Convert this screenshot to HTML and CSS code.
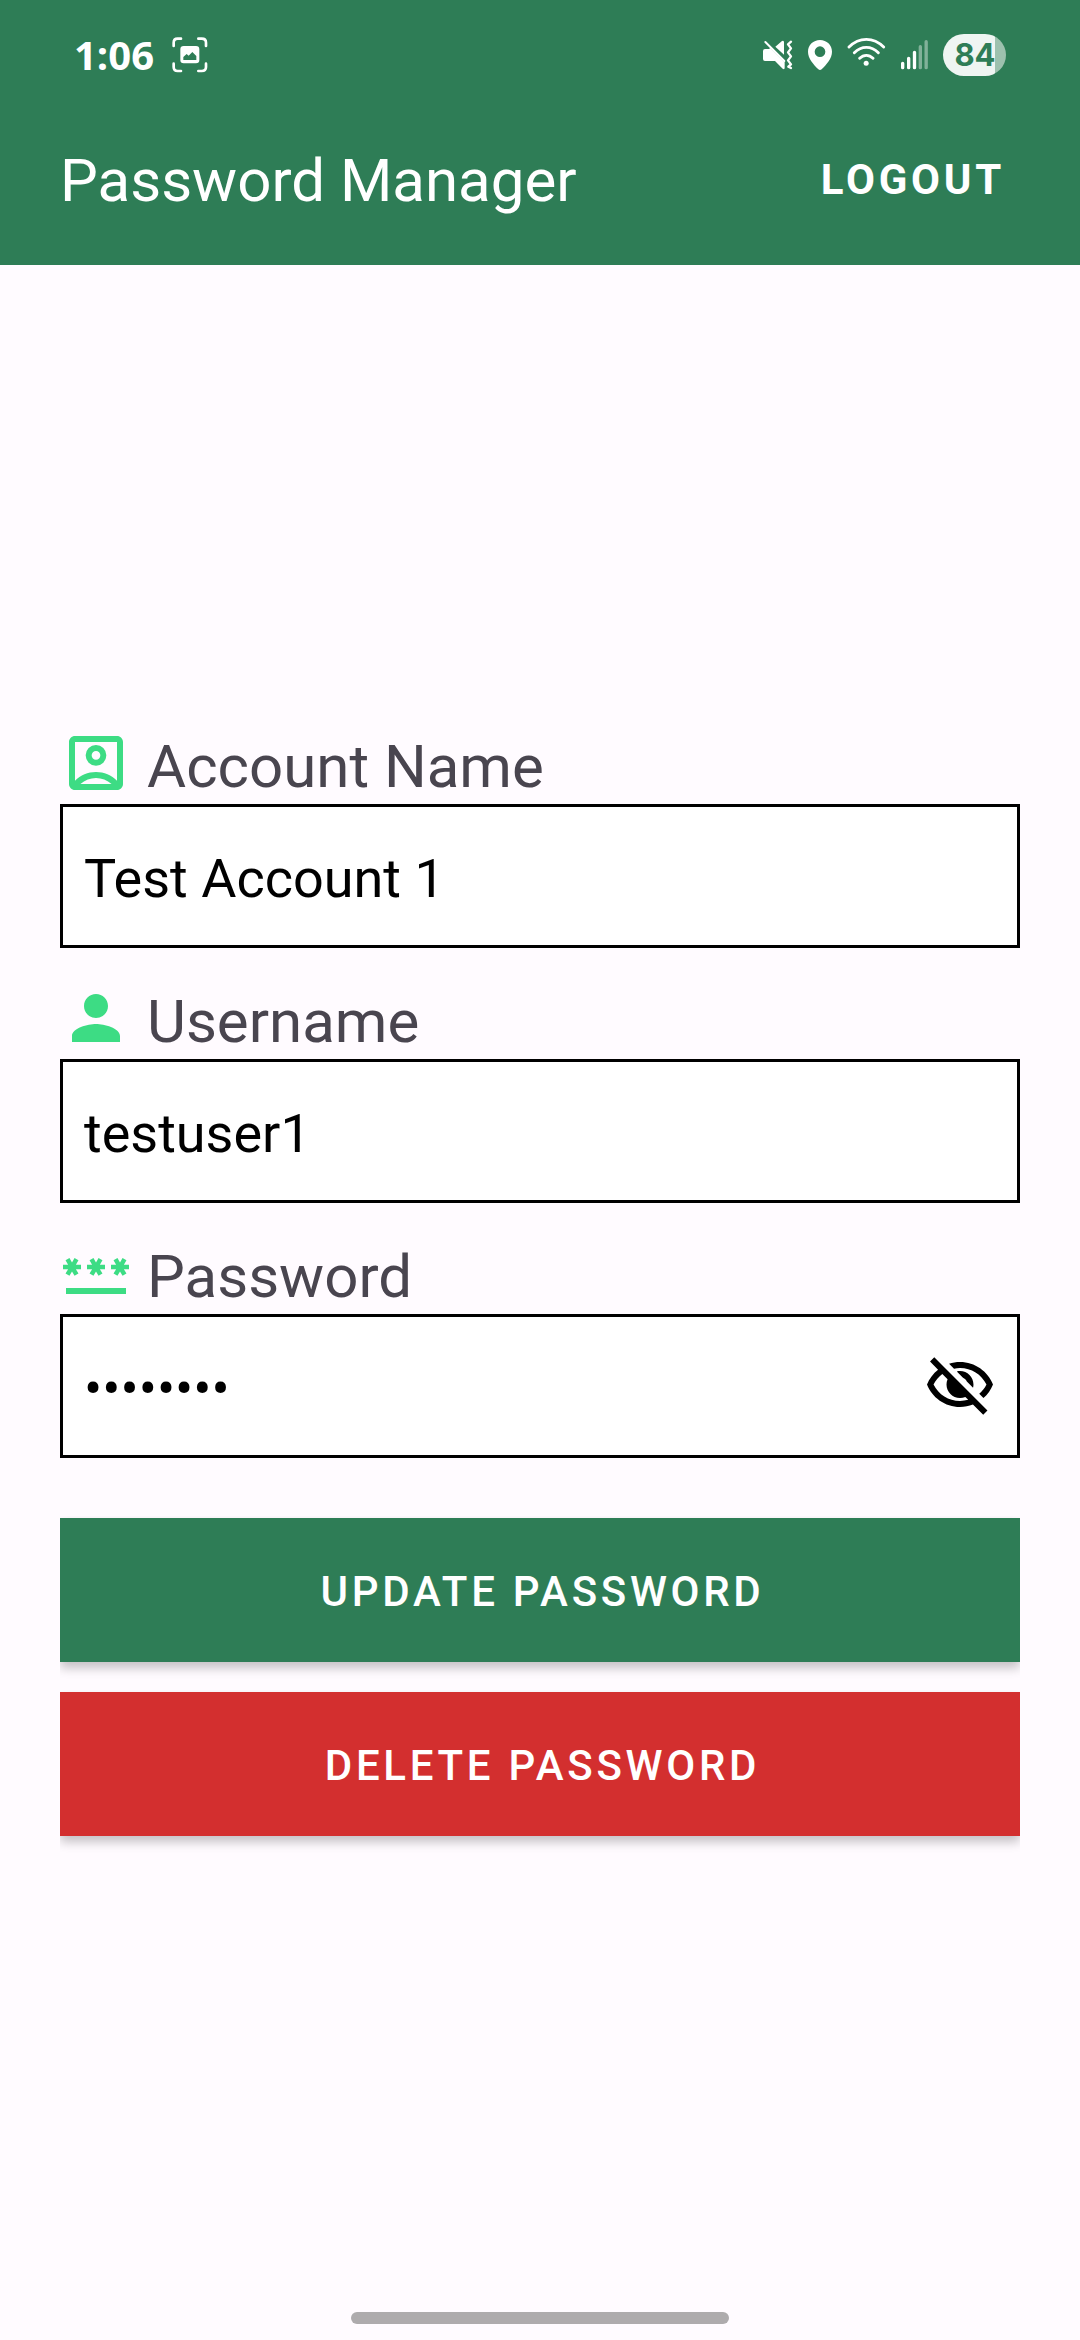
FILE: index.html
```html
<!DOCTYPE html>
<html lang="en">
<head>
<meta charset="utf-8">
<title>Password Manager</title>
<link rel="stylesheet" href="styles.css">
</head>
<body>
<header class="header">
  <div class="status">
    <span class="clock">1:06</span>
    <svg class="capture" width="36" height="36" viewBox="395 83 108 108" fill="none" stroke="#fff" stroke-width="8" stroke-linecap="round">
      <path d="M400 110V100Q400 88 412 88H422M474 88H484Q497 88 497 100V110M497 163V173Q497 185 484 185H474M422 185H412Q400 185 400 173V163"/>
      <path fill="#fff" stroke="none" fill-rule="evenodd" d="M430 110H467Q477 110 477 120V152Q477 162 467 162H430Q420 162 420 152V120Q420 110 430 110ZM429 143L439 134L445 139L456 128L468 140V152H429Z"/>
    </svg>
    <div class="indicators">
      <svg width="30" height="30" viewBox="66 90 90 90" fill="#fff">
        <path d="M72 117H84L88 114L131 157V173Q131 180 125 176L102 153H72Q66 153 66 147V123Q66 117 72 117ZM103 110L123 93Q129 90 129 97V134Z"/>
        <path d="M73 96L130 153" stroke="#fff" stroke-width="6" stroke-linecap="round"/>
        <path d="M150 95L141 103L150 115L141 127L150 139L141 151L150 163L142 170L150 174" fill="none" stroke="#fff" stroke-width="7" stroke-linecap="round" stroke-linejoin="round"/>
      </svg>
      <svg width="24" height="30" viewBox="204 90 72 90">
        <path fill="#fff" fill-rule="evenodd" d="M240 90C220 90 204 105 204 125C204 146 220 162 235 178Q240 182 245 178C260 162 276 146 276 125C276 105 260 90 240 90ZM240 109A16 16 0 1 1 240 141A16 16 0 1 1 240 109Z"/>
      </svg>
      <svg width="39" height="36" viewBox="321 81 117 108" fill="none" stroke="#fff" stroke-width="8.500" stroke-linecap="round">
        <path d="M327 111Q350 88 379 88Q408 88 431 111M343 128Q359 112 379 112Q399 112 415 128M359 145Q368 136 379 136Q390 136 399 145"/>
        <circle cx="378.500" cy="160" r="7.500" fill="#fff" stroke="none"/>
      </svg>
      <svg width="27" height="30" viewBox="483 90 81 90" fill="none" stroke="#fff" stroke-width="10" stroke-linecap="round">
        <path d="M488 160V173M506 145V173M523.500 127V173"/>
        <path d="M541 110V173M558.500 95V173" opacity=".4"/>
      </svg>
      <span class="battery">84</span>
    </div>
  </div>
  <div class="toolbar">
    <h1 class="title">Password Manager</h1>
    <button class="logout">LOGOUT</button>
  </div>
</header>
<main class="form">
  <section class="field">
    <div class="label">
      <svg class="icon" viewBox="0 0 24 24"><path fill-rule="evenodd" d="M19 3H5c-1.110 0-2 .9-2 2v14c0 1.100.89 2 2 2h14c1.100 0 2-.9 2-2V5c0-1.100-.9-2-2-2zM6.800 19c1.500-1.250 3.300-2 5.200-2s3.700.75 5.200 2zM19 17.900C17.200 16.100 14.700 15 12 15s-5.200 1.100-7 2.900V5h14zM12 6a3.450 3.450 0 1 0 0 6.900A3.450 3.450 0 0 0 12 6zm0 4.900a1.450 1.450 0 1 1 0-2.900a1.450 1.450 0 0 1 0 2.900z"/></svg>
      <span>Account Name</span>
    </div>
    <div class="box">Test Account 1</div>
  </section>
  <section class="field">
    <div class="label">
      <svg class="icon" viewBox="0 0 24 24"><path d="M12 12c2.210 0 4-1.790 4-4s-1.790-4-4-4-4 1.790-4 4 1.790 4 4 4zm0 2c-2.670 0-8 1.340-8 4v2h16v-2c0-2.660-5.330-4-8-4z"/></svg>
      <span>Username</span>
    </div>
    <div class="box">testuser1</div>
  </section>
  <section class="field">
    <div class="label">
      <svg class="icon" viewBox="0 0 24 24"><path d="M2 17h20v2H2zM3.150 12.950L4 11.470l.85 1.480 1.300-.75-.85-1.480H7v-1.500H5.300l.85-1.470L4.850 7 4 8.470 3.150 7l-1.300.75.85 1.470H1v1.500h1.700l-.85 1.480zM9.850 12.200l1.300.75.85-1.480.85 1.480 1.300-.75-.85-1.480H15v-1.500h-1.700l.85-1.470-1.300-.75L12 8.470 11.150 7l-1.300.75.85 1.470H9v1.500h1.700zM23 9.220h-1.700l.85-1.470-1.300-.75L20 8.470 19.150 7l-1.300.75.85 1.470H17v1.500h1.700l-.85 1.480 1.300.75.85-1.480.85 1.480 1.300-.75-.85-1.480H23z"/></svg>
      <span>Password</span>
    </div>
    <div class="box">
      <span class="dots">••••••••</span>
      <svg class="eye" viewBox="0 0 24 24"><path d="M12 6c3.790 0 7.170 2.130 8.820 5.500-.59 1.220-1.420 2.270-2.410 3.120l1.410 1.410c1.390-1.230 2.490-2.770 3.180-4.530C21.270 7.110 17 4 12 4c-1.270 0-2.490.2-3.640.57l1.650 1.650C10.660 6.090 11.320 6 12 6zm-1.070 1.140L13 9.210c.57.25 1.030.71 1.280 1.280l2.070 2.070c.08-.34.14-.7.14-1.070C16.500 9.010 14.480 7 12 7c-.37 0-.72.05-1.070.14zM2.010 3.870l2.680 2.680C3.060 7.830 1.770 9.530 1 11.500 2.730 15.890 7 19 12 19c1.520 0 2.980-.29 4.320-.82l3.420 3.420 1.410-1.410L3.420 2.450 2.010 3.870zm4.100 4.100l1.750 1.750c-.23.55-.36 1.150-.36 1.780 0 2.480 2.020 4.500 4.500 4.500.63 0 1.230-.13 1.770-.36l.98.98c-.88.24-1.800.38-2.750.38-3.790 0-7.170-2.130-8.820-5.500.7-1.430 1.720-2.610 2.930-3.530z"/></svg>
    </div>
  </section>
  <div class="actions">
    <button class="action update">UPDATE PASSWORD</button>
    <button class="action delete">DELETE PASSWORD</button>
  </div>
</main>
<footer class="nav"><div class="handle"></div></footer>
</body>
</html>
```
FILE: styles.css
```css
* {
  box-sizing: border-box;
}

body {
  margin: 0;
  width: 1080px;
  height: 2340px;
  display: flex;
  flex-direction: column;
  background: #fffbff;
  font-family: Roboto, sans-serif;
  overflow: hidden;
}

svg {
  display: block;
  flex: none;
}

button {
  border: 0;
  padding: 0;
  background: none;
  font-family: inherit;
  color: #fff;
}

.header {
  height: 265px;
  background: #2e7d56;
  color: #fff;
}

.status {
  height: 110px;
  padding: 0 74px 0 74px;
  display: flex;
  align-items: center;
}

.clock {
  width: 98px;
  font: 700 40px/48px "Open Sans", sans-serif;
}

.indicators {
  margin-left: auto;
  display: flex;
  align-items: center;
  gap: 15px;
}

.battery {
  width: 63px;
  height: 42px;
  padding-left: 1px;
  border-radius: 21px;
  background: linear-gradient(90deg, #eff5f2 52px, #9dc1ae 52px);
  color: #2e7d56;
  font: 700 31px/42px Inter, sans-serif;
  text-align: center;
}

.toolbar {
  height: 140px;
  padding: 1px 75px 0 60px;
  display: flex;
  align-items: center;
  justify-content: space-between;
}

.title {
  margin: 0;
  font-size: 60px;
  font-weight: 400;
  line-height: 70px;
}

.logout {
  margin-bottom: 2px;
  font-size: 42px;
  font-weight: 700;
  letter-spacing: 3.75px;
  line-height: 50px;
}

.form {
  padding: 462px 60px 0;
  flex: 1;
}

.field {
  margin-bottom: 34px;
}

.label {
  height: 77px;
  display: flex;
  align-items: flex-start;
  gap: 15px;
  font-size: 60px;
  line-height: 79px;
  color: #49454f;
}

.icon {
  width: 72px;
  height: 72px;
  fill: #3ddc84;
}

.box {
  height: 144px;
  padding: 4px 21px 0;
  border: 3px solid #000;
  background: #fff;
  display: flex;
  align-items: center;
  justify-content: space-between;
  font-size: 54px;
  line-height: 63px;
  color: #000;
}

.eye {
  width: 72px;
  height: 72px;
  margin-top: -4px;
}

.actions {
  padding-top: 26px;
  display: flex;
  flex-direction: column;
  gap: 30px;
}

.action {
  height: 144px;
  padding: 3px 0 0 5px;
  font-size: 42px;
  font-weight: 500;
  letter-spacing: 3.7px;
  box-shadow: 0 6px 10px rgba(0, 0, 0, 0.23);
  clip-path: inset(-2px 0 -20px 0);
}

.update {
  background: #2e7d56;
}

.delete {
  background: #d32f2f;
}

.nav {
  height: 28px;
  display: flex;
  justify-content: center;
}

.handle {
  width: 378px;
  height: 12px;
  border-radius: 6px;
  background: #aeabad;
}
```
